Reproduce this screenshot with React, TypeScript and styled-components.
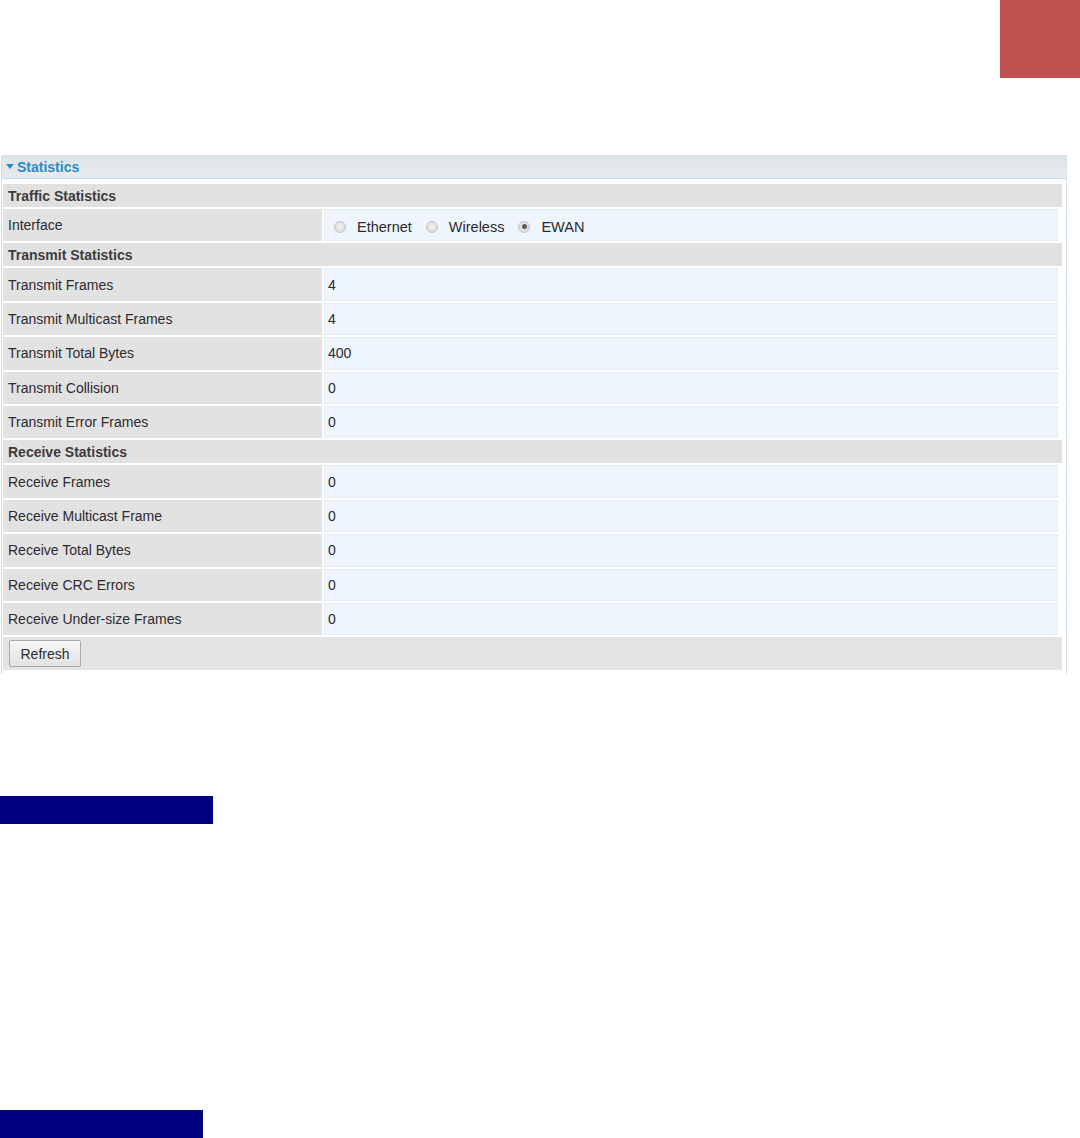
import React from 'react'
import styled, { createGlobalStyle } from 'styled-components'

const GlobalStyle = createGlobalStyle`
  html, body {
    margin: 0;
    padding: 0;
    background: #ffffff;
  }
  body {
    font-family: "Liberation Sans", Arial, sans-serif;
    font-size: 14px;
    color: #2d2a2e;
  }
`

const Page = styled.div`
  width: 1080px;
  height: 1138px;
  overflow: hidden;
`

const TopBand = styled.div`
  height: 155px;
  display: flex;
  justify-content: flex-end;
  align-items: flex-start;
`

const CornerTab = styled.div`
  width: 80px;
  height: 78px;
  background: #c0504d;
`

const Panel = styled.div`
  margin-left: 1px;
  width: 1064px;
  border-left: 1px solid #c9dfe9;
  border-right: 1px solid #d6e3e8;
`

const PanelHeader = styled.div`
  height: 24px;
  box-sizing: border-box;
  display: flex;
  align-items: center;
  padding-left: 4px;
  background: linear-gradient(#dce4e6, #e9eaee);
  border-top: 1px solid #d3e0e4;
  border-bottom: 1px solid #c6dde8;
`

const Caret = styled.span`
  width: 0;
  height: 0;
  border-left: 4px solid transparent;
  border-right: 4px solid transparent;
  border-top: 5px solid #2c8ccc;
  margin-right: 3px;
  margin-top: -2px;
`

const PanelTitle = styled.span`
  color: #2a8bc9;
  font-weight: bold;
  font-size: 14px;
`

const PanelBody = styled.div`
  padding: 5px 2px 4px 1px;
  display: flex;
  flex-direction: column;
  gap: 2px;
`

const SectionHead = styled.div`
  height: 23px;
  display: flex;
  align-items: center;
  padding-left: 5px;
  margin-right: 2px;
  background: #e2e1e1;
  font-weight: bold;
  color: #3d3b3d;
`

const Row = styled.div`
  height: 32.4px;
  display: flex;
  margin-right: 6px;
`

const LabelCell = styled.div`
  width: 319px;
  box-sizing: border-box;
  flex-shrink: 0;
  display: flex;
  align-items: center;
  padding-left: 5px;
  background: #e3e2e2;
  margin-right: 2px;
`

const ValueCell = styled.div`
  flex: 1;
  display: flex;
  align-items: center;
  padding-left: 3px;
  background: #eef5fc;
  border: 1px solid #e4eef8;
  box-sizing: border-box;
`

const RadioGroup = styled.div`
  display: flex;
  align-items: center;
  padding-left: 6px;
  padding-top: 3px;
`

const RadioDot = styled.span<{ $checked?: boolean }>`
  width: 12px;
  height: 12px;
  border-radius: 50%;
  box-sizing: border-box;
  border: 1px solid #c4c4c4;
  background: radial-gradient(circle at 50% 45%, #f4f4f4, #d2d2d2);
  display: inline-flex;
  align-items: center;
  justify-content: center;
  margin-right: 11px;
  &::after {
    content: '';
    width: 5px;
    height: 5px;
    border-radius: 50%;
    background: ${({ $checked }) => ($checked ? '#5b5b5b' : 'transparent')};
  }
`

const RadioText = styled.span`
  margin-right: 14px;
  font-size: 14.5px;
`

const FooterRow = styled.div`
  height: 33px;
  display: flex;
  align-items: center;
  padding-left: 6px;
  margin-right: 2px;
  background: #e4e3e3;
`

const RefreshButton = styled.button`
  font-family: "Liberation Sans", Arial, sans-serif;
  font-size: 14px;
  color: #2d2a2e;
  height: 27px;
  width: 72px;
  padding: 0;
  background: linear-gradient(#f7f7f7, #e2e2e2);
  border: 1px solid #a9a9a9;
  border-radius: 2px;
`

const Bar = styled.div<{ $w: number; $top: number }>`
  width: ${({ $w }) => $w}px;
  height: 28px;
  margin-top: ${({ $top }) => $top}px;
  background: #000080;
`

const transmit = [
  ['Transmit Frames', '4'],
  ['Transmit Multicast Frames', '4'],
  ['Transmit Total Bytes', '400'],
  ['Transmit Collision', '0'],
  ['Transmit Error Frames', '0'],
]

const receive = [
  ['Receive Frames', '0'],
  ['Receive Multicast Frame', '0'],
  ['Receive Total Bytes', '0'],
  ['Receive CRC Errors', '0'],
  ['Receive Under-size Frames', '0'],
]

const StatRow: React.FC<{ label: string; value: string }> = ({ label, value }) => (
  <Row>
    <LabelCell>{label}</LabelCell>
    <ValueCell>{value}</ValueCell>
  </Row>
)

export default function App() {
  return (
    <Page>
      <GlobalStyle />
      <TopBand>
        <CornerTab />
      </TopBand>
      <Panel>
        <PanelHeader>
          <Caret />
          <PanelTitle>Statistics</PanelTitle>
        </PanelHeader>
        <PanelBody>
          <SectionHead>Traffic Statistics</SectionHead>
          <Row>
            <LabelCell>Interface</LabelCell>
            <ValueCell>
              <RadioGroup>
                <RadioDot />
                <RadioText>Ethernet</RadioText>
                <RadioDot />
                <RadioText>Wireless</RadioText>
                <RadioDot $checked />
                <RadioText>EWAN</RadioText>
              </RadioGroup>
            </ValueCell>
          </Row>
          <SectionHead>Transmit Statistics</SectionHead>
          {transmit.map(([l, v]) => (
            <StatRow key={l} label={l} value={v} />
          ))}
          <SectionHead>Receive Statistics</SectionHead>
          {receive.map(([l, v]) => (
            <StatRow key={l} label={l} value={v} />
          ))}
          <FooterRow>
            <RefreshButton>Refresh</RefreshButton>
          </FooterRow>
        </PanelBody>
      </Panel>
      <Bar $w={213} $top={122} />
      <Bar $w={203} $top={286} />
    </Page>
  )
}
